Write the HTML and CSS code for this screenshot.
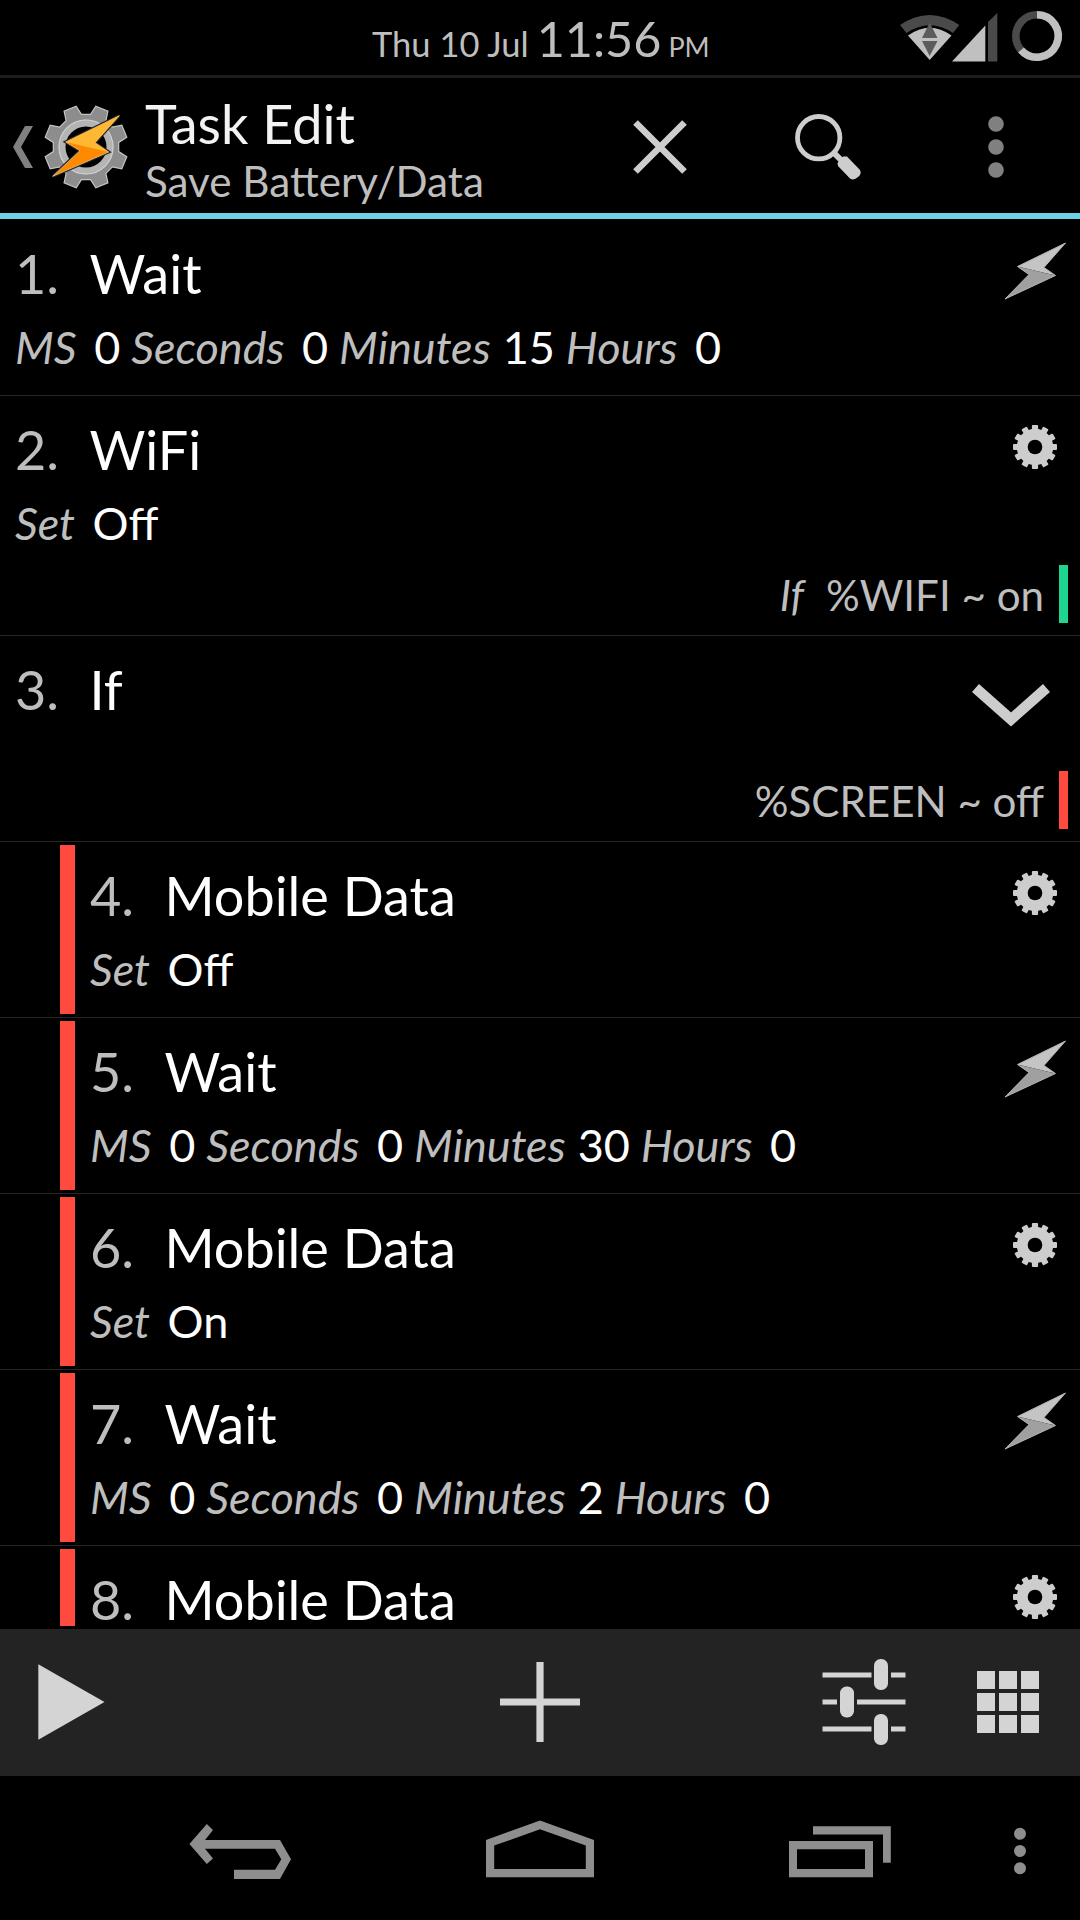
FILE: index.html
```html
<!DOCTYPE html>
<html lang="en">
<head>
  <meta charset="UTF-8" />
  <meta name="viewport" content="width=device-width, initial-scale=1.0"/>
  <title>Task Edit</title>
  <link rel="stylesheet" href="styles.css">
</head>
<body>

  <!-- shared row icons -->
  <svg class="defs" width="0" height="0">
    <symbol id="bolt" viewBox="0 0 66 66">
      <path d="M63.5 5 L42 29.5 L53.5 37.5 L15.5 28.5 Z" fill="#c4c4c4"/>
      <path d="M15.5 28.5 L53.5 37.5 L3 61 L27 36.5 Z" fill="#a0a0a0"/>
      <path d="M63.5 5 L42 29.5 L53.5 37.5 L3 61 L27 36.5 L15.5 28.5 Z" fill="none" stroke="#b4b4b4" stroke-width="1"/>
    </symbol>
    <symbol id="gear" viewBox="-33 -33 66 66">
      <g fill="#cdcdcd">
        <rect x="-3.1" y="-22" width="6.2" height="44" rx="1"/>
        <rect x="-3.1" y="-22" width="6.2" height="44" rx="1" transform="rotate(30)"/>
        <rect x="-3.1" y="-22" width="6.2" height="44" rx="1" transform="rotate(60)"/>
        <rect x="-3.1" y="-22" width="6.2" height="44" rx="1" transform="rotate(90)"/>
        <rect x="-3.1" y="-22" width="6.2" height="44" rx="1" transform="rotate(120)"/>
        <rect x="-3.1" y="-22" width="6.2" height="44" rx="1" transform="rotate(150)"/>
        <circle r="18.2"/>
      </g>
      <circle r="7.3" fill="#000"/>
    </symbol>
  </svg>

  <div class="status-bar">
    <div class="clock">
      <span class="date">Thu 10 Jul</span>
      <span class="time">11:56</span>
      <span class="ampm">PM</span>
    </div>
    <svg class="status-icons" width="180" height="75" viewBox="900 0 180 75">
      <path d="M900 25 Q929.7 5 959.3 25 L953 33 Q929.7 17.5 906.5 33 Z" fill="#4a4a4a"/>
      <path d="M908 35.5 Q929.7 20 951.5 35.5 L929.7 60 Z" fill="#c0c0c0"/>
      <path d="M929.7 22.5 L937.5 38 H922 Z M922 41 H937.5 L929.7 56 Z" fill="#5c5c5c"/>
      <path d="M952 61.5 L985.3 25.5 V61.5 Z" fill="#c0c0c0"/>
      <path d="M988 22 L997.3 13 V61.5 H988 Z" fill="#4a4a4a"/>
      <circle cx="1037" cy="36" r="21.2" fill="none" stroke="#4a4a4a" stroke-width="7.6"/>
      <path d="M1037 14.8 A21.2 21.2 0 1 1 1021 49.9" fill="none" stroke="#c0c0c0" stroke-width="7.6"/>
    </svg>
  </div>

  <div class="action-bar">
    <svg class="up" width="20" height="42" viewBox="0 0 20 42"><path d="M12 0 H20 L8 21 L20 42 H12 L0 21 Z" fill="#808080"/></svg>
    <svg class="logo" width="90" height="90" viewBox="-45 -45 90 90">
      <path d="M-4.6 -32.7 L4.6 -32.7 L9.8 -40.8 L21.9 -35.8 L19.9 -26.4 L26.4 -19.9 L35.8 -21.9 L40.8 -9.8 L32.7 -4.6 L32.7 4.6 L40.8 9.8 L35.8 21.9 L26.4 19.9 L19.9 26.4 L21.9 35.8 L9.8 40.8 L4.6 32.7 L-4.6 32.7 L-9.8 40.8 L-21.9 35.8 L-19.9 26.4 L-26.4 19.9 L-35.8 21.9 L-40.8 9.8 L-32.7 4.6 L-32.7 -4.6 L-40.8 -9.8 L-35.8 -21.9 L-26.4 -19.9 L-19.9 -26.4 L-21.9 -35.8 L-9.8 -40.8 Z" fill="#8d8d8d" stroke="#c4c4c4" stroke-width="1.2"/>
      <circle r="24" fill="#000" stroke="#b4b4b4" stroke-width="7"/>
      <circle r="27" fill="none" stroke="#cfcfcf" stroke-width="1.2"/>
      <path d="M33.3 -31.3 L9 -4.3 L22.7 5 L-33.3 29.3 L-6 3.7 L-20.3 -5 Z" fill="#ff8a00" stroke="#222" stroke-width="3"/>
      <path d="M33.3 -31.3 L9 -4.3 L22.7 5 L-33.3 29.3 L-6 3.7 L-20.3 -5 Z" fill="#ff8a00" stroke="#e8c088" stroke-width=".8"/>
      <path d="M33.3 -31.3 L9 -4.3 L22.7 5 L-20.3 -5 Z" fill="#ffb833"/>
    </svg>
    <div class="titles">
      <div class="title">Task Edit</div>
      <div class="subtitle">Save Battery/Data</div>
    </div>
    <div class="actions">
      <svg width="60" height="60" viewBox="-30 -30 60 60"><path d="M-24.5 -24.5 L24.5 24.5 M24.5 -24.5 L-24.5 24.5" stroke="#cdcdcd" stroke-width="6.6"/></svg>
      <svg class="search" width="70" height="70" viewBox="793 112 70 70">
        <circle cx="818.7" cy="137.7" r="21.2" fill="none" stroke="#cdcdcd" stroke-width="4.8"/>
        <path d="M833 152 L842 161" stroke="#cdcdcd" stroke-width="6"/>
        <path d="M837.5 163 L843 156.5 H847 L860 170 Q862 174 858 177 Q854 181 850 178.5 L838 166 Z" fill="#cdcdcd"/>
      </svg>
      <svg width="16" height="64" viewBox="-8 -32 16 64" fill="#808080"><circle cy="-23" r="7.8"/><circle r="7.8"/><circle cy="23" r="7.8"/></svg>
    </div>
  </div>

  <div class="list">
    <div class="item">
      <div class="body">
        <div class="head">
          <div class="text">
            <div class="name"><span class="num">1.</span>Wait</div>
            <div class="args"><i>MS</i><b>0</b><i>Seconds</i><b>0</b><i class="tight">Minutes</i><b>15</b><i>Hours</i><b>0</b></div>
          </div>
          <svg class="icon"><use href="#bolt"/></svg>
        </div>
      </div>
    </div>

    <div class="item">
      <div class="body">
        <div class="head">
          <div class="text">
            <div class="name"><span class="num">2.</span>WiFi</div>
            <div class="args"><i>Set</i><b>Off</b></div>
          </div>
          <svg class="icon"><use href="#gear"/></svg>
        </div>
        <div class="cond true"><i>If</i>%WIFI ~ on</div>
      </div>
    </div>

    <div class="item">
      <div class="body">
        <div class="head">
          <div class="text">
            <div class="name"><span class="num">3.</span>If</div>
          </div>
          <svg class="chevron" width="80" height="46" viewBox="971 683 80 46"><path d="M975.5 688 L1011 719.5 L1046.5 688" fill="none" stroke="#cdcdcd" stroke-width="10.5"/></svg>
        </div>
        <div class="cond false">%SCREEN ~ off</div>
      </div>
    </div>

    <div class="item nested">
      <div class="body">
        <div class="head">
          <div class="text">
            <div class="name"><span class="num">4.</span>Mobile Data</div>
            <div class="args"><i>Set</i><b>Off</b></div>
          </div>
          <svg class="icon"><use href="#gear"/></svg>
        </div>
      </div>
    </div>

    <div class="item nested">
      <div class="body">
        <div class="head">
          <div class="text">
            <div class="name"><span class="num">5.</span>Wait</div>
            <div class="args"><i>MS</i><b>0</b><i>Seconds</i><b>0</b><i class="tight">Minutes</i><b>30</b><i>Hours</i><b>0</b></div>
          </div>
          <svg class="icon"><use href="#bolt"/></svg>
        </div>
      </div>
    </div>

    <div class="item nested">
      <div class="body">
        <div class="head">
          <div class="text">
            <div class="name"><span class="num">6.</span>Mobile Data</div>
            <div class="args"><i>Set</i><b>On</b></div>
          </div>
          <svg class="icon"><use href="#gear"/></svg>
        </div>
      </div>
    </div>

    <div class="item nested">
      <div class="body">
        <div class="head">
          <div class="text">
            <div class="name"><span class="num">7.</span>Wait</div>
            <div class="args"><i>MS</i><b>0</b><i>Seconds</i><b>0</b><i class="tight">Minutes</i><b>2</b><i>Hours</i><b>0</b></div>
          </div>
          <svg class="icon"><use href="#bolt"/></svg>
        </div>
      </div>
    </div>

    <div class="item nested last">
      <div class="body">
        <div class="head">
          <div class="text">
            <div class="name"><span class="num">8.</span>Mobile Data</div>
          </div>
          <svg class="icon"><use href="#gear"/></svg>
        </div>
      </div>
    </div>
  </div>

  <div class="toolbar">
    <svg class="play" width="68" height="78" viewBox="37 1663 68 78"><path d="M38.3 1664.3 L104.5 1702 L38.3 1739.7 Z" fill="#d4d4d4"/></svg>
    <svg class="plus" width="80" height="80" viewBox="-40 -40 80 80"><path d="M-40 0 H40 M0 -40 V40" stroke="#d4d4d4" stroke-width="7.2"/></svg>
    <svg class="sliders" width="84" height="88" viewBox="822 1658 84 88">
      <path d="M822.5 1675 H871.5 M891 1675 H905.5 M822.5 1702 H837 M857 1702 H905.5 M822.5 1729 H871.5 M891 1729 H905.5" stroke="#d4d4d4" stroke-width="5"/>
      <g fill="#d4d4d4">
        <rect x="874" y="1659" width="14" height="31" rx="6.5"/>
        <rect x="840" y="1686.5" width="14" height="31" rx="6.5"/>
        <rect x="874" y="1714" width="14" height="31" rx="6.5"/>
      </g>
    </svg>
    <div class="grid"><span></span><span></span><span></span><span></span><span></span><span></span><span></span><span></span><span></span></div>
  </div>

  <div class="nav-bar">
    <svg class="nav-back" width="104" height="60" viewBox="188 1821 104 60"><path d="M189.4 1844 L206.8 1824 L213 1830 L205 1840 H280 L291 1859.3 L280 1879 H234 V1869.7 H275 L281.3 1859.3 L275 1848.7 H205 L213 1858.5 L206.8 1864 Z" fill="#8e8e8e"/></svg>
    <svg class="nav-home" width="108" height="58" viewBox="486 1820 108 58"><path d="M486 1840 L540 1820.5 L594 1840 V1877.2 H486 Z M494.2 1845.6 V1869 H585.8 V1845.6 L540 1829.2 Z" fill="#8e8e8e" fill-rule="evenodd"/></svg>
    <svg class="nav-recent" width="102" height="52" viewBox="789 1826 102 52"><path d="M813 1826.2 H890.8 V1862.7 H883 V1834.6 H813 Z M789 1841 H873 V1877.2 H789 Z M797 1849.3 V1869 H865 V1849.3 Z" fill="#8e8e8e" fill-rule="evenodd"/></svg>
    <svg class="nav-menu" width="12" height="48" viewBox="-6 -24 12 48" fill="#8e8e8e"><circle cy="-17.3" r="6"/><circle r="6"/><circle cy="17.3" r="6"/></svg>
  </div>

</body>
</html>
```
FILE: styles.css
```css
* {
  box-sizing: border-box;
}
body {
  margin: 0;
  width: 1080px;
  height: 1920px;
  background: #000;
  color: #fff;
  font-family: Lato, sans-serif;
  line-height: 1.2;
  overflow: hidden;
  display: flex;
  flex-direction: column;
}
svg {
  display: block;
  flex: none;
}
.defs {
  position: absolute;
}

/* status bar */
.status-bar {
  height: 78px;
  flex: none;
  display: flex;
  justify-content: flex-end;
  border-bottom: 3px solid #1c1c1c;
}
.clock {
  width: 380px;
  margin-right: 148px;
  padding-top: 9px;
  display: flex;
  align-items: baseline;
  white-space: nowrap;
  color: #bebebe;
}
.date {
  font-size: 34.5px;
  margin-right: 8px;
}
.time {
  font-size: 48.5px;
  margin-right: 7px;
}
.ampm {
  font-size: 27px;
}

/* action bar */
.action-bar {
  height: 141px;
  flex: none;
  display: flex;
  align-items: center;
  padding-left: 13px;
  border-bottom: 6px solid #6dd0e7;
}
.up {
  margin-top: 3px;
}
.logo {
  margin: 2px 0 0 7.5px;
}
.titles {
  margin: 6px 0 0 14.5px;
  width: 350px;
  white-space: nowrap;
}
.title {
  font-size: 54px;
  line-height: 65px;
  color: #f3f3f3;
}
.subtitle {
  font-size: 42.2px;
  line-height: 50px;
  color: #bebebe;
}
.actions {
  flex: 1;
  display: flex;
  align-items: center;
  padding: 3px 0 0 135px;
}
.search {
  margin: 0 125px 0 103px;
}

/* task list */
.list {
  height: 1410px;
  flex: none;
  padding: 1px 0 3px;
}
.item {
  display: flex;
  border-bottom: 1px solid #262626;
}
.body {
  flex: 1;
  padding: 21px 12px 0 15px;
}
.nested::before {
  content: "";
  width: 15px;
  margin: 3px 0 3px 60px;
  background: #ff4a40;
}
.head {
  display: flex;
  justify-content: space-between;
  align-items: flex-start;
  min-height: 98px;
}
.name {
  font-size: 54px;
  line-height: 65px;
  display: flex;
}
.num {
  width: 74.5px;
  color: #bebebe;
}
.args {
  font-size: 45px;
  line-height: 53px;
  margin: 15px 0 21px;
  display: flex;
  white-space: nowrap;
}
.args b {
  font-weight: normal;
  margin-right: 11px;
}
.args i {
  color: #bebebe;
  margin-right: 17.5px;
}
.args .tight {
  margin-right: 12px;
}
.icon {
  width: 66px;
  height: 66px;
  margin-top: -3px;
}
.chevron {
  margin: 26px 17px 0 0;
}
.cond {
  height: 58px;
  margin: 16px 0 12px;
  padding-right: 15px;
  border-right: 9px solid;
  text-align: right;
  font-size: 42.1px;
  line-height: 59px;
}
.cond i {
  margin-right: 22px;
}
.cond.true {
  border-color: #1ed690;
  margin-top: -6px;
}
.cond.false {
  border-color: #ff4a40;
}
.cond.true,
.cond.false {
  color: #bebebe;
}

/* last visible row, runs into the toolbar */
.last {
  height: 80px;
  border-bottom: 0;
}
.last::before {
  margin-bottom: 0;
}
.last .body {
  padding-top: 24px;
}
.last .head {
  min-height: 0;
}
.last .name {
  line-height: 59px;
}
.last .icon {
  margin-top: -6px;
}

/* bottom toolbar */
.toolbar {
  height: 147px;
  flex: none;
  display: flex;
  align-items: center;
  padding-bottom: 1px;
  background: #232323;
}
.play {
  margin-left: 37px;
}
.plus {
  margin-left: 395px;
}
.sliders {
  margin-left: 242px;
}
.grid {
  margin-left: 71px;
  width: 62px;
  height: 62px;
  display: grid;
  grid-template-columns: repeat(3, 1fr);
  gap: 4.6px;
}
.grid span {
  background: #d4d4d4;
}

/* system navigation */
.nav-bar {
  flex: 1;
  display: flex;
  align-items: flex-start;
}
.nav-back {
  margin: 45px 0 0 188px;
}
.nav-home {
  margin: 44px 0 0 194px;
}
.nav-recent {
  margin: 50px 0 0 195px;
}
.nav-menu {
  margin: 51px 0 0 123px;
}
```
